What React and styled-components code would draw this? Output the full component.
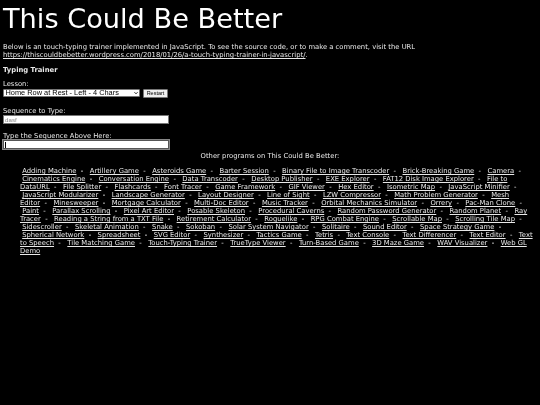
import React from "react"
import styled, { createGlobalStyle } from "styled-components"

const GlobalStyle = createGlobalStyle`
    html, body {
        margin: 0;
        background: #000;
    }
    body {
        color: #e8e8e8;
        font-family: "DejaVu Sans", sans-serif;
        font-size: 6.8px;
        line-height: 8px;
    }
`

// the reference is a downscaled capture, so everything is slightly soft
const Page = styled.div`
    padding: 3px 3px 0 3px;
    display: flex;
    flex-direction: column;
    filter: blur(0.3px);
`

const Title = styled.h1`
    margin: 0;
    font-size: 27.2px;
    font-weight: 400;
    line-height: 32px;
    color: #fff;
`

const Intro = styled.p`
    margin: 8px 0 0 0;
`

const Link = styled.a`
    color: #e8e8e8;
    text-decoration: underline;
`

const Heading = styled.h2`
    margin: 7px 0 0 0;
    font-size: 6.8px;
    font-weight: 700;
    line-height: 8px;
`

const Field = styled.div`
    margin-top: ${(p) => p.$gap}px;
    display: flex;
    flex-direction: column;
`

const Row = styled.div`
    display: flex;
    align-items: center;
    gap: 3px;
    height: 10px;
`

const SelectWrap = styled.div`
    position: relative;
    width: 137px;
    height: 8px;
`

const LessonSelect = styled.select`
    display: block;
    box-sizing: border-box;
    appearance: none;
    width: 100%;
    height: 100%;
    padding: 0 0 0 1.5px;
    border: 1px solid #767676;
    border-radius: 1px;
    background: #fff;
    color: #000;
    font-family: "Liberation Sans", sans-serif;
    font-size: 7.4px;
    line-height: 6px;
`

const Chevron = styled.svg`
    position: absolute;
    right: 2px;
    top: 2px;
    width: 4px;
    height: 4px;
    pointer-events: none;
`

const RestartButton = styled.button`
    width: 25px;
    height: 9px;
    padding: 0;
    border: 1px solid #767676;
    border-radius: 1px;
    background: #efefef;
    color: #000;
    font-family: "Liberation Sans", sans-serif;
    font-size: 5.5px;
    line-height: 6px;
`

const TextBox = styled.input`
    box-sizing: border-box;
    width: 166px;
    height: ${(p) => p.$h}px;
    padding: 0 1px;
    background: #fff;
    border: 1px solid ${(p) => (p.$focus ? "#555" : "#777")};
    outline: ${(p) => (p.$focus ? "1px solid #888" : "none")};
    color: #000;
    font-family: "Liberation Sans", sans-serif;
    font-size: 6.2px;

    &::placeholder {
        color: #8a8a8a;
        opacity: 1;
    }
`

const Caret = styled.span`
    position: absolute;
    left: 2px;
    top: 2px;
    width: 1px;
    height: 6px;
    background: #000;
`

const TextBoxWrap = styled.div`
    position: relative;
    width: 166px;
`

const OtherTitle = styled.div`
    margin-top: 3px;
    text-align: center;
`

const Programs = styled.div`
    margin: 7px 4px 0 17px;
    text-align: left;
`

const programs = [
    "Adding Machine", "Artillery Game", "Asteroids Game", "Barter Session",
    "Binary File to Image Transcoder", "Brick-Breaking Game", "Camera",
    "Cinematics Engine", "Conversation Engine", "Data Transcoder", "Desktop Publisher",
    "EXE Explorer", "FAT12 Disk Image Explorer", "File to DataURL", "File Splitter",
    "Flashcards", "Font Tracer", "Game Framework", "GIF Viewer", "Hex Editor",
    "Isometric Map", "JavaScript Minifier", "JavaScript Modularizer", "Landscape Generator",
    "Layout Designer", "Line of Sight", "LZW Compressor", "Math Problem Generator",
    "Mesh Editor", "Minesweeper", "Mortgage Calculator", "Multi-Doc Editor", "Music Tracker",
    "Orbital Mechanics Simulator", "Orrery", "Pac-Man Clone", "Paint", "Parallax Scrolling",
    "Pixel Art Editor", "Posable Skeleton", "Procedural Caverns", "Random Password Generator",
    "Random Planet", "Ray Tracer", "Reading a String from a TXT File", "Retirement Calculator",
    "Roguelike", "RPG Combat Engine", "Scrollable Map", "Scrolling Tile Map", "Sidescroller",
    "Skeletal Animation", "Snake", "Sokoban", "Solar System Navigator", "Solitaire",
    "Sound Editor", "Space Strategy Game", "Spherical Network", "Spreadsheet", "SVG Editor",
    "Synthesizer", "Tactics Game", "Tetris", "Text Console", "Text Differencer", "Text Editor",
    "Text to Speech", "Tile Matching Game", "Touch-Typing Trainer", "TrueType Viewer",
    "Turn-Based Game", "3D Maze Game", "WAV Visualizer", "Web GL Demo",
]

function App() {
    return (
        <Page>
            <GlobalStyle />
            <Title>This Could Be Better</Title>
            <Intro>
                Below is an touch-typing trainer implemented in JavaScript. To see the source code, or to make a comment, visit the URL{" "}
                <Link href="#">https://thiscouldbebetter.wordpress.com/2018/01/26/a-touch-typing-trainer-in-javascript/</Link>.
            </Intro>
            <Heading>Typing Trainer</Heading>
            <Field $gap={6}>
                <label>Lesson:</label>
                <Row>
                    <SelectWrap>
                        <LessonSelect defaultValue="home">
                            <option value="home">Home Row at Rest - Left - 4 Chars</option>
                        </LessonSelect>
                        <Chevron viewBox="0 0 8 8">
                            <path d="M1 2.5 L4 5.5 L7 2.5" fill="none" stroke="#000" strokeWidth="1.8" />
                        </Chevron>
                    </SelectWrap>
                    <RestartButton>Restart</RestartButton>
                </Row>
            </Field>
            <Field $gap={9}>
                <label>Sequence to Type:</label>
                <TextBox $h={9} readOnly placeholder="dasf" />
            </Field>
            <Field $gap={8}>
                <label>Type the Sequence Above Here:</label>
                <TextBoxWrap>
                    <TextBox $h={9} $focus readOnly />
                    <Caret />
                </TextBoxWrap>
            </Field>
            <OtherTitle>Other programs on This Could Be Better:</OtherTitle>
            <Programs>
                {programs.map((name, i) => (
                    <React.Fragment key={name}>
                        {"\u00a0"}
                        <Link href="#">{name}</Link>
                        {i < programs.length - 1 ? "\u00a0\u00a0-\u00a0 " : ""}
                    </React.Fragment>
                ))}
            </Programs>
        </Page>
    )
}

export default App
